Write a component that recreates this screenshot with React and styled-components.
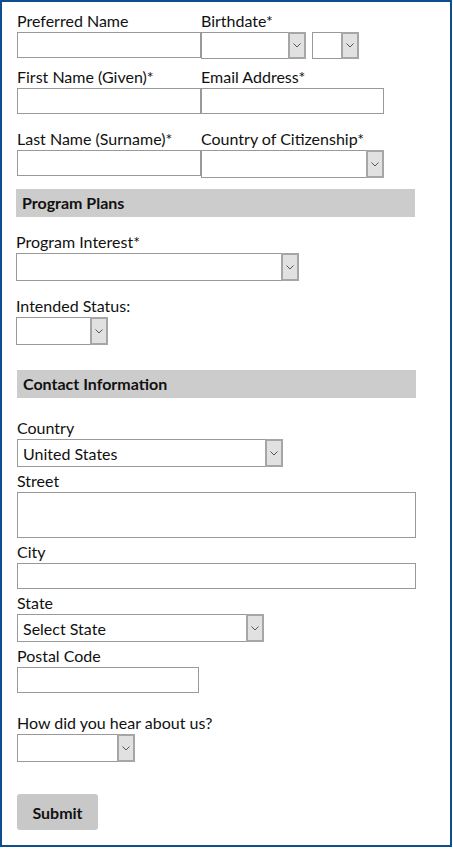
import React from "react";
import styled, { createGlobalStyle } from "styled-components";

const GlobalStyle = createGlobalStyle`
  html, body {
    margin: 0;
    padding: 0;
    background: #ffffff;
  }
  body {
    font-family: Lato, "Open Sans", Arial, sans-serif;
    color: #111;
  }
  * {
    box-sizing: border-box;
  }
`;

const Frame = styled.div`
  width: 452px;
  height: 847px;
  border: 2px solid #0d4e8e;
  padding: 10px 15px 0 15px;
`;

const Row = styled.div`
  display: grid;
  grid-template-columns: 184px 1fr;
  align-items: start;
  margin-bottom: ${(p) => p.$mb || 0}px;
`;

const Field = styled.div`
  display: flex;
  flex-direction: column;
  align-items: flex-start;
  margin-bottom: ${(p) => p.$mb || 0}px;
  margin-left: ${(p) => p.$ml || 0}px;
`;

const Label = styled.label`
  font-size: 16px;
  line-height: 18px;
  margin-bottom: 2px;
  color: #111;
  white-space: nowrap;
`;

const TextInput = styled.input`
  width: ${(p) => p.$w}px;
  height: 26px;
  border: 1px solid #999;
  background: #fff;
  font: inherit;
  padding: 2px 5px;
  outline: none;
`;

const TextArea = styled.textarea`
  width: ${(p) => p.$w}px;
  height: 46px;
  border: 1px solid #999;
  background: #fff;
  font: inherit;
  resize: none;
  outline: none;
  display: block;
`;

const SelectBox = styled.div`
  position: relative;
  width: ${(p) => p.$w}px;
  height: ${(p) => p.$h || 28}px;
  border: 1px solid #999;
  background: #fff;
`;

const NativeSelect = styled.select`
  appearance: none;
  -webkit-appearance: none;
  width: 100%;
  height: 100%;
  border: none;
  background: transparent;
  font-family: Lato, "Open Sans", Arial, sans-serif;
  font-size: 16px;
  color: #111;
  padding: 0 20px 0 5px;
  outline: none;
`;

const Arrow = styled.span`
  position: absolute;
  top: -1px;
  right: -1px;
  bottom: -1px;
  width: 18px;
  background: #e1e1e1;
  border: 2px solid #a6a6a6;
  display: flex;
  align-items: center;
  justify-content: center;
  pointer-events: none;
`;

const Inline = styled.div`
  display: flex;
  gap: 6px;
`;

const SectionHeader = styled.div`
  width: 399px;
  height: 28px;
  background: #cccccc;
  font-size: 16px;
  font-weight: 700;
  line-height: 28px;
  padding-left: 6px;
  margin-left: ${(p) => p.$ml || 0}px;
  margin-bottom: ${(p) => p.$mb || 0}px;
  color: #111;
`;

const SubmitButton = styled.button`
  width: 81px;
  height: 36px;
  border: none;
  border-radius: 3px;
  background: #c8c8c8;
  font-family: Lato, "Open Sans", Arial, sans-serif;
  font-size: 16px;
  font-weight: 700;
  color: #111;
  cursor: pointer;
  display: block;
`;

const Chevron = () => (
  <svg width="8" height="5" viewBox="0 0 8 5">
    <path d="M0.5 0.5 L4 4 L7.5 0.5" fill="none" stroke="#555" strokeWidth="1" />
  </svg>
);

const Select = ({ w, h, value, options = [""] }) => (
  <SelectBox $w={w} $h={h}>
    <NativeSelect defaultValue={value}>
      {options.map((o) => (
        <option key={o}>{o}</option>
      ))}
    </NativeSelect>
    <Arrow>
      <Chevron />
    </Arrow>
  </SelectBox>
);

export default function App() {
  return (
    <>
      <GlobalStyle />
      <Frame>
        <form onSubmit={(e) => e.preventDefault()}>
          <Row $mb={9}>
            <Field>
              <Label>Preferred Name</Label>
              <TextInput $w={184} />
            </Field>
            <Field>
              <Label>Birthdate*</Label>
              <Inline>
                <Select w={105} h={27} />
                <Select w={47} h={27} />
              </Inline>
            </Field>
          </Row>

          <Row $mb={16}>
            <Field>
              <Label>First Name (Given)*</Label>
              <TextInput $w={184} />
            </Field>
            <Field>
              <Label>Email Address*</Label>
              <TextInput $w={183} />
            </Field>
          </Row>

          <Row $mb={11}>
            <Field>
              <Label>Last Name (Surname)*</Label>
              <TextInput $w={184} />
            </Field>
            <Field>
              <Label>Country of Citizenship*</Label>
              <Select w={183} />
            </Field>
          </Row>

          <SectionHeader $ml={-1} $mb={16}>Program Plans</SectionHeader>

          <Field $ml={-1} $mb={16}>
            <Label>Program Interest*</Label>
            <Select w={283} />
          </Field>

          <Field $ml={-1} $mb={25}>
            <Label>Intended Status:</Label>
            <Select w={92} />
          </Field>

          <SectionHeader $mb={21}>Contact Information</SectionHeader>

          <Field $mb={5}>
            <Label>Country</Label>
            <Select w={266} value="United States" options={["United States"]} />
          </Field>

          <Field $mb={5}>
            <Label>Street</Label>
            <TextArea $w={399} />
          </Field>

          <Field $mb={5}>
            <Label>City</Label>
            <TextInput $w={399} />
          </Field>

          <Field $mb={5}>
            <Label>State</Label>
            <Select w={247} value="Select State" options={["Select State"]} />
          </Field>

          <Field $mb={21}>
            <Label>Postal Code</Label>
            <TextInput $w={182} />
          </Field>

          <Field $mb={32}>
            <Label>How did you hear about us?</Label>
            <Select w={118} />
          </Field>

          <SubmitButton type="submit">Submit</SubmitButton>
        </form>
      </Frame>
    </>
  );
}
